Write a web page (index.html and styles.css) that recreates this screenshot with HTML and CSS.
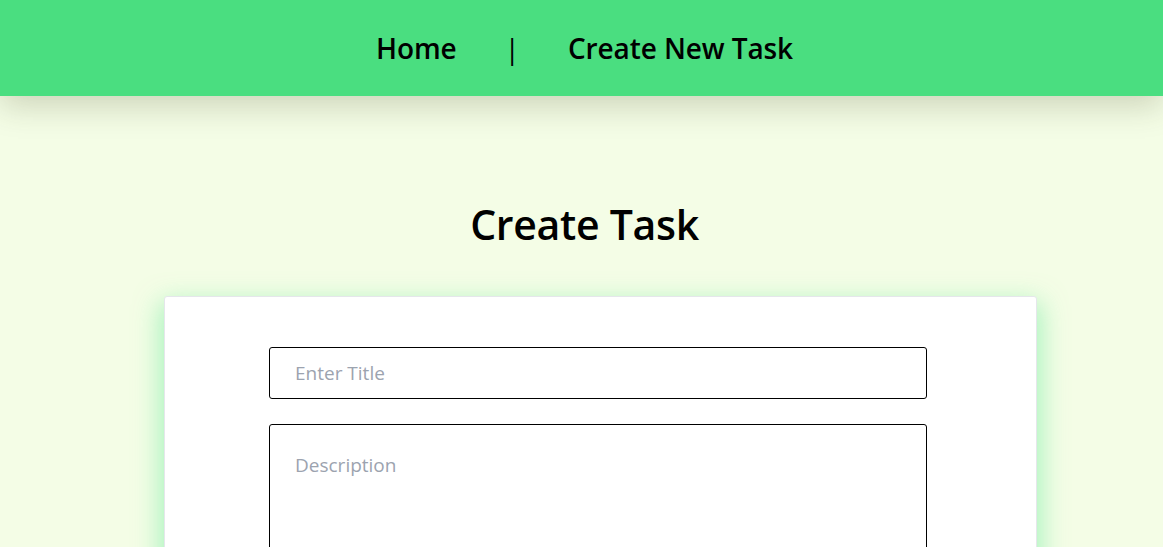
FILE: index.html
```html
<!DOCTYPE html>
<html lang="en">
<head>
<meta charset="utf-8">
<title>Create Task</title>
<link rel="stylesheet" href="styles.css">
</head>
<body>
<header class="topbar">
  <nav class="nav">
    <a class="nav-link" href="#">Home</a>
    <span class="nav-sep">|</span>
    <a class="nav-link" href="#">Create New Task</a>
  </nav>
</header>
<main class="main">
  <h1 class="page-title">Create Task</h1>
  <form class="card">
    <input class="field" type="text" placeholder="Enter Title">
    <textarea class="field field-area" placeholder="Description"></textarea>
  </form>
</main>
</body>
</html>
```

FILE: styles.css
```css
* { box-sizing: border-box; }
html, body { margin: 0; padding: 0; }
body {
  background: #f4fde6;
  font-family: "Open Sans", "Noto Sans", sans-serif;
  color: #000;
  min-height: 100vh;
}
.topbar {
  height: 96px;
  background: #4ade80;
  display: flex;
  align-items: center;
  justify-content: center;
  box-shadow: 0 10px 30px rgba(70, 70, 30, 0.22);
  position: relative;
  z-index: 1;
}
.nav {
  display: flex;
  align-items: center;
  gap: 48px;
  font-size: 28px;
  font-weight: 600;
  padding-left: 6px;
}
.nav-link { color: #000; text-decoration: none; letter-spacing: -0.1px; }
.nav-sep { font-weight: 500; }
.main {
  display: flex;
  flex-direction: column;
  align-items: center;
  padding-top: 98px;
}
.page-title {
  margin: 0 0 42px;
  font-size: 41px;
  font-weight: 600;
  line-height: 60px;
  letter-spacing: -0.3px;
  padding-left: 6px;
}
.card {
  width: 873px;
  margin-left: 38px;
  background: #fff;
  border: 1px solid #e5e7eb;
  border-radius: 3px;
  box-shadow: 0 10px 26px 4px rgba(134, 239, 172, 0.7);
  padding: 50px 109px 40px 104px;
  display: flex;
  flex-direction: column;
  gap: 25px;
  min-height: 300px;
}
.field {
  width: 658px;
  height: 52px;
  border: 1px solid #000;
  border-radius: 3px;
  padding: 0 25px;
  font-family: "Open Sans", "Noto Sans", sans-serif;
  font-size: 19px;
  outline: none;
  background: #fff;
}
.field::placeholder { color: #9ca3af; }
.field-area {
  height: 150px;
  padding: 27px 25px;
  resize: none;
}
```
